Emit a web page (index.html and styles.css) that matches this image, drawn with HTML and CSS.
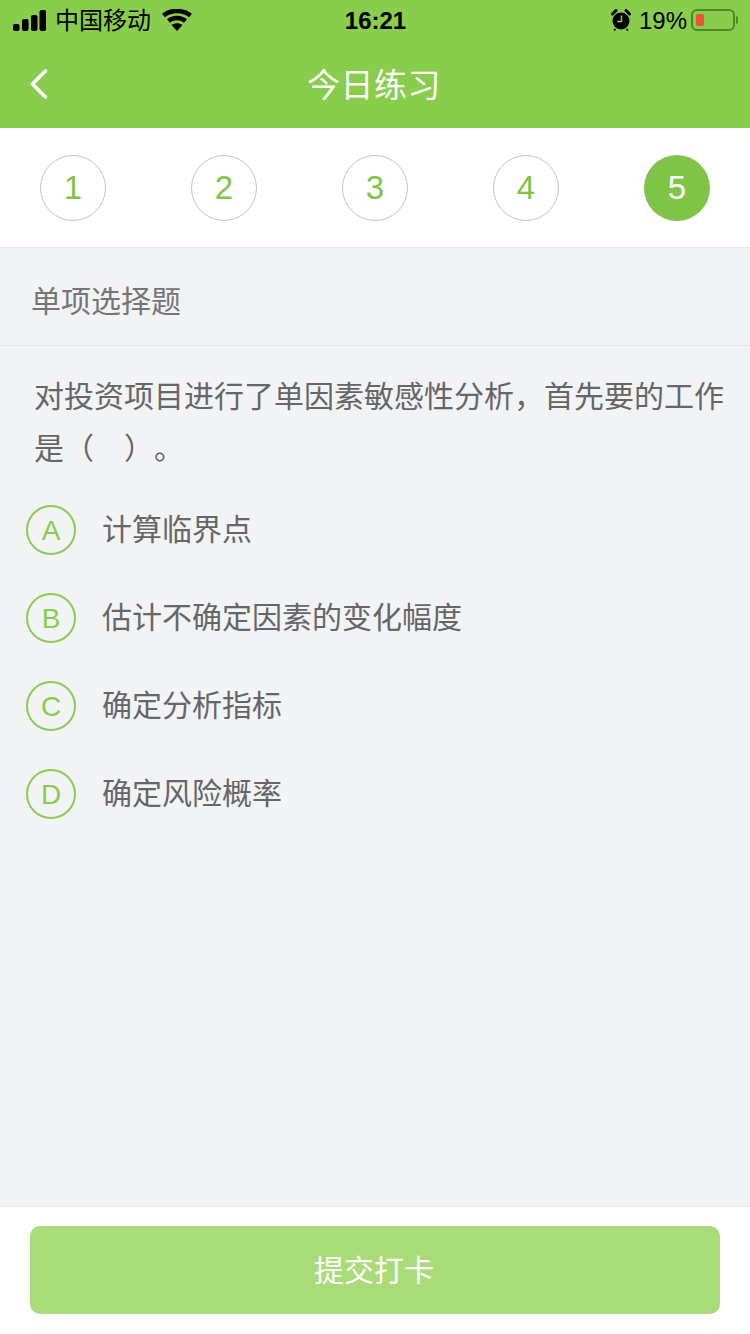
FILE: index.html
```html
<!DOCTYPE html>
<html lang="zh">
<head>
    <meta charset="UTF-8">
    <meta name="viewport" content="width=device-width, initial-scale=1.0">
    <title>今日练习</title>
    <link rel="stylesheet" href="styles.css">
</head>
<body>
    <div class="page">
        <header class="header">
            <div class="status-bar">
                <div class="status-left">
                    <svg class="signal" width="33" height="21" viewBox="0 0 33 21">
                        <rect x="0" y="14" width="6.5" height="7" rx="2"/>
                        <rect x="9" y="9" width="6.5" height="12" rx="2"/>
                        <rect x="18" y="5" width="6.5" height="16" rx="2"/>
                        <rect x="26.5" y="0" width="6.5" height="21" rx="2"/>
                    </svg>
                    <span class="carrier">中国移动</span>
                    <svg class="wifi" width="30" height="22" viewBox="0 0 30 22">
                        <path d="M1.5 6.5C9 0.5 21 0.5 28.5 6.5" />
                        <path d="M6.5 12C11 8 19 8 23.5 12" />
                        <path class="wifi-dot" d="M9.5 16C13 13.5 17 13.5 20.5 16L15 22Z" />
                    </svg>
                </div>
                <div class="status-time">16:21</div>
                <div class="status-right">
                    <svg class="alarm" width="20" height="22" viewBox="0 0 20 22">
                        <circle cx="10" cy="12" r="8.5" fill="#000"/>
                        <path d="M1.5 5L5 1.5M18.5 5L15 1.5" stroke="#000" stroke-width="3" stroke-linecap="round"/>
                        <path d="M4.5 20L3 21.5M15.5 20L17 21.5" stroke="#000" stroke-width="1.6"/>
                        <path d="M10.5 6.5V12.5H6" stroke="#88cd4b" stroke-width="1.5" fill="none"/>
                    </svg>
                    <span class="battery-text">19%</span>
                    <div class="battery">
                        <div class="battery-body"><div class="battery-level"></div></div>
                        <div class="battery-cap"></div>
                    </div>
                </div>
            </div>
            <div class="nav-bar">
                <svg class="back" width="22" height="34" viewBox="0 0 22 34">
                    <path d="M17.5 4L4.5 17L17.5 30"/>
                </svg>
                <h1 class="nav-title">今日练习</h1>
            </div>
        </header>

        <div class="steps">
            <div class="step">1</div>
            <div class="step">2</div>
            <div class="step">3</div>
            <div class="step">4</div>
            <div class="step active">5</div>
        </div>

        <main class="content">
            <div class="type-row">单项选择题</div>
            <p class="question">对投资项目进行了单因素敏感性分析，首先要的工作是（　）。</p>
            <div class="options">
                <div class="option"><span class="option-mark">A</span><span class="option-text">计算临界点</span></div>
                <div class="option"><span class="option-mark">B</span><span class="option-text">估计不确定因素的变化幅度</span></div>
                <div class="option"><span class="option-mark">C</span><span class="option-text">确定分析指标</span></div>
                <div class="option"><span class="option-mark">D</span><span class="option-text">确定风险概率</span></div>
            </div>
        </main>

        <footer class="footer">
            <button class="submit">提交打卡</button>
        </footer>
    </div>
</body>
</html>
```

FILE: styles.css
```css
* {
    box-sizing: border-box;
}
html, body {
    margin: 0;
    padding: 0;
}
body {
    font-family: "Liberation Sans", Arial, "Noto Sans CJK SC", sans-serif;
    background-color: #f2f3f5;
}
.page {
    width: 750px;
    height: 1334px;
    display: flex;
    flex-direction: column;
    overflow: hidden;
}
.header {
    height: 128px;
    background-color: #88cd4b;
}
.status-bar {
    height: 40px;
    padding: 0 12px 0 13px;
    display: grid;
    grid-template-columns: 1fr auto 1fr;
    align-items: center;
    color: #000;
}
.status-left {
    display: flex;
    align-items: center;
}
.signal {
    fill: #000;
}
.carrier {
    font-size: 24px;
    line-height: 34px;
    margin-left: 9px;
    margin-top: 2px;
}
.wifi {
    margin-left: 11px;
    fill: none;
    stroke: #000;
    stroke-width: 4.5;
}
.wifi-dot {
    fill: #000;
    stroke: none;
}
.status-time {
    font-size: 24px;
    font-weight: bold;
    margin-top: 2px;
}
.status-right {
    display: flex;
    align-items: center;
    justify-content: flex-end;
}
.battery-text {
    font-size: 24px;
    margin-left: 8px;
    margin-top: 1px;
}
.battery {
    display: flex;
    align-items: center;
    margin-left: 4px;
}
.battery-body {
    width: 44px;
    height: 22px;
    padding: 3px;
    border: 2px solid #53872c;
    border-radius: 6px;
}
.battery-level {
    width: 8px;
    height: 100%;
    background-color: #f0523a;
    border-radius: 2px;
}
.battery-cap {
    width: 2px;
    height: 8px;
    margin-left: 1px;
    background-color: #53872c;
    border-radius: 0 2px 2px 0;
}
.nav-bar {
    height: 88px;
    display: flex;
    align-items: center;
    justify-content: center;
    position: relative;
}
.back {
    position: absolute;
    left: 28px;
    top: 27px;
    fill: none;
    stroke: #fff;
    stroke-width: 3.5;
    stroke-linecap: round;
}
.nav-title {
    margin: 0 2px 2px 0;
    font-size: 33px;
    font-weight: normal;
    color: #fff;
    letter-spacing: 0.5px;
}
.steps {
    height: 120px;
    padding: 0 40px;
    background-color: #fff;
    border-bottom: 1px solid #e6e6e6;
    display: flex;
    align-items: center;
    justify-content: space-between;
}
.step {
    width: 66px;
    height: 66px;
    margin-top: 1px;
    border: 1px solid #c4c4c4;
    border-radius: 50%;
    display: flex;
    align-items: center;
    justify-content: center;
    font-size: 33px;
    color: #7fc446;
}
.step.active {
    border: none;
    background-color: #7fc446;
    color: #fff;
}
.content {
    flex: 1;
}
.type-row {
    height: 98px;
    padding: 4px 0 0 31px;
    display: flex;
    align-items: center;
    border-bottom: 1px solid #e6e6e8;
    font-size: 30px;
    color: #757575;
}
.question {
    margin: 0;
    padding: 25px 20px 0 34px;
    font-size: 30px;
    line-height: 52px;
    color: #666;
    text-spacing-trim: space-all;
}
.options {
    padding: 30px 0 0 26px;
    display: flex;
    flex-direction: column;
    gap: 38px;
}
.option {
    height: 50px;
    display: flex;
    align-items: center;
}
.option-mark {
    width: 50px;
    height: 50px;
    padding-top: 2px;
    border: 2px solid #8ccb56;
    border-radius: 50%;
    display: flex;
    align-items: center;
    justify-content: center;
    font-size: 28px;
    color: #88cd4b;
}
.option-text {
    margin-left: 26px;
    margin-top: -6px;
    font-size: 30px;
    color: #666;
}
.footer {
    height: 128px;
    padding: 19px 30px 0;
    background-color: #fff;
    border-top: 1px solid #e8e8e8;
}
.submit {
    width: 690px;
    height: 88px;
    padding: 0 2px 4px 0;
    border: none;
    border-radius: 10px;
    background-color: #a9dc78;
    font-family: inherit;
    font-size: 30px;
    color: #fff;
}
```
